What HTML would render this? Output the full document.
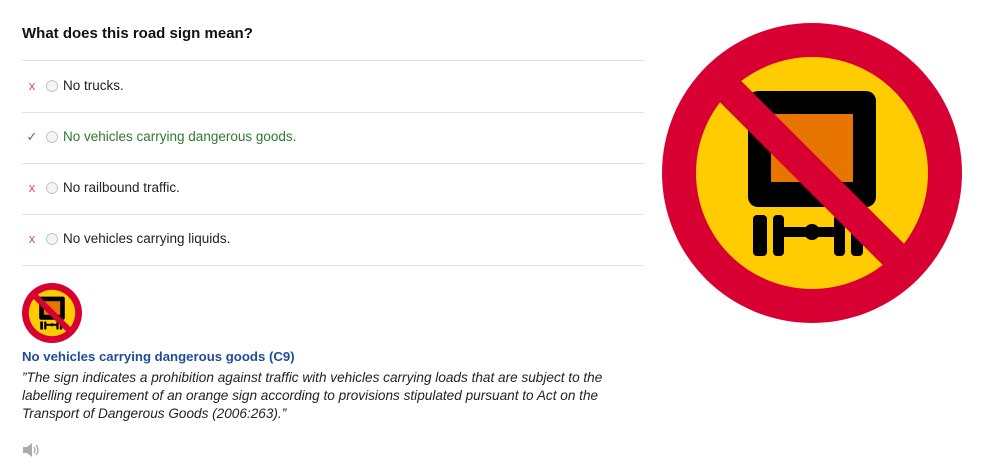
<!DOCTYPE html>
<html><head><style>
body{margin:0;width:992px;height:475px;background:#fff;font-family:"Liberation Sans",Arial,sans-serif;position:relative;overflow:hidden}
.q{position:absolute;left:22px;top:25px;font-size:15px;font-weight:bold;color:#111}
.hr{position:absolute;left:22px;width:622px;height:1px;background:#e2e2e2}
.opt{position:absolute;left:26px;font-size:13.5px;color:#222;height:16px;line-height:16px}
.opt .m{position:absolute;left:0;width:12px;text-align:center;font-size:13px}
.opt .r{position:absolute;left:20px;top:2px;width:12px;height:12px;border-radius:50%;border:1px solid #c8c8c8;background:#f4f4f4;box-sizing:border-box}
.opt .t{position:absolute;left:37px;white-space:nowrap}
.title{position:absolute;left:22px;top:349px;font-size:13.2px;font-weight:bold;color:#1f4d9a}
.desc{position:absolute;left:22px;top:369px;font-size:13.6px;font-style:italic;color:#222;line-height:18px;width:610px}
</style></head><body>
<svg width="0" height="0" style="position:absolute"><defs>
<g id="sign">
<circle r="150" fill="#d80032"/>
<circle r="116" fill="#fecc00"/>
<rect x="-64" y="-82" width="128" height="116" rx="10" fill="#000"/>
<rect x="-41" y="-59" width="82" height="68" fill="#e87500"/>
<rect x="-59" y="42" width="14" height="41" rx="4" fill="#000"/>
<rect x="-39" y="42" width="11" height="41" rx="4" fill="#000"/>
<rect x="22" y="42" width="11" height="41" rx="4" fill="#000"/>
<rect x="39" y="42" width="12" height="41" rx="4" fill="#000"/>
<rect x="-30" y="54" width="54" height="10" fill="#000"/>
<circle cx="0" cy="59" r="8" fill="#000"/>
<line x1="-84" y1="-84" x2="84" y2="84" stroke="#d80032" stroke-width="30"/>
</g></defs></svg>
<div class="q">What does this road sign mean?</div>
<div class="hr" style="top:60px"></div>
<div class="hr" style="top:112px"></div>
<div class="hr" style="top:163px"></div>
<div class="hr" style="top:214px"></div>
<div class="hr" style="top:265px"></div>
<div class="opt" style="top:78px"><span class="m" style="color:#e05050">x</span><span class="r"></span><span class="t">No trucks.</span></div>
<div class="opt" style="top:129px"><span class="m" style="color:#2f8a2f">✓</span><span class="r"></span><span class="t" style="color:#2f7a2f">No vehicles carrying dangerous goods.</span></div>
<div class="opt" style="top:180px"><span class="m" style="color:#e05050">x</span><span class="r"></span><span class="t">No railbound traffic.</span></div>
<div class="opt" style="top:231px"><span class="m" style="color:#e05050">x</span><span class="r"></span><span class="t">No vehicles carrying liquids.</span></div>
<svg style="position:absolute;left:662px;top:23px" width="300" height="300" viewBox="-150 -150 300 300"><use href="#sign"/></svg>
<svg style="position:absolute;left:22px;top:283px" width="60" height="60" viewBox="-150 -150 300 300"><use href="#sign"/></svg>
<div class="title">No vehicles carrying dangerous goods (C9)</div>
<div class="desc">”The sign indicates a prohibition against traffic with vehicles carrying loads that are subject to the labelling requirement of an orange sign according to provisions stipulated pursuant to Act on the Transport of Dangerous Goods (2006:263).”</div>
<svg style="position:absolute;left:22px;top:442px" width="18" height="16" viewBox="0 0 18 16"><path d="M1 5h4l5-4v14l-5-4H1z" fill="#aaa"/><path d="M12 5q2 3 0 6M14 3q4 5 0 10" stroke="#aaa" fill="none" stroke-width="1.3"/></svg>
</body></html>
